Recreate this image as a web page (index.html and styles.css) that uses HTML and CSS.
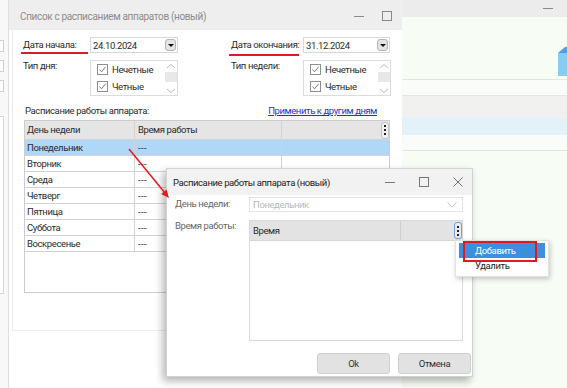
FILE: index.html
```html
<!DOCTYPE html>
<html lang="ru">
<head>
    <meta charset="UTF-8">
    <meta name="viewport" content="width=device-width, initial-scale=1.0">
    <title>Список с расписанием аппаратов</title>
    <link rel="stylesheet" href="styles.css">
</head>

<body>
    <div class="desktop">
        <!-- strip of the window behind, on the left -->
        <div class="side-left">
            <div class="stub"></div>
            <div class="stub"></div>
            <div class="stub"></div>
            <div class="stub-panel"></div>
        </div>

        <!-- main window -->
        <div class="main-win">
            <div class="win-title">
                <span>Список с расписанием аппаратов (новый)</span>
                <span class="win-btns">
                    <span class="btn-min"></span>
                    <span class="btn-max"></span>
                </span>
            </div>
            <div class="main-body">
                <div class="panel">
                    <div class="params">
                        <div class="param-col">
                            <div class="param-row">
                                <label class="lbl lbl-start marked">Дата начала:</label>
                                <div class="date-box"><span>24.10.2024</span><span class="drop-btn"></span></div>
                            </div>
                            <div class="param-row row-list">
                                <label class="lbl lbl-start">Тип дня:</label>
                                <div class="check-list">
                                    <div class="check-items">
                                        <div class="check-item"><span class="cb"><svg width="9" height="9" viewBox="0 0 9 9"><polyline points="1.5,4.5 3.5,6.8 7.6,1.8" fill="none" stroke="#7a7a7a" stroke-width="1"/></svg></span>Нечетные</div>
                                        <div class="check-item"><span class="cb"><svg width="9" height="9" viewBox="0 0 9 9"><polyline points="1.5,4.5 3.5,6.8 7.6,1.8" fill="none" stroke="#7a7a7a" stroke-width="1"/></svg></span>Четные</div>
                                    </div>
                                    <div class="vscroll">
                                        <svg width="12" height="9" viewBox="0 0 12 9"><polyline points="2,6 6,2.5 10,6" fill="none" stroke="#b9b9b9" stroke-width="1"/></svg>
                                        <div class="thumb"></div>
                                        <svg width="12" height="9" viewBox="0 0 12 9"><polyline points="2,3 6,6.5 10,3" fill="none" stroke="#b9b9b9" stroke-width="1"/></svg>
                                    </div>
                                </div>
                            </div>
                        </div>
                        <div class="param-col">
                            <div class="param-row">
                                <label class="lbl lbl-end marked marked-end">Дата окончания:</label>
                                <div class="date-box box-end"><span>31.12.2024</span><span class="drop-btn"></span></div>
                            </div>
                            <div class="param-row row-list">
                                <label class="lbl lbl-end">Тип недели:</label>
                                <div class="check-list box-end">
                                    <div class="check-items">
                                        <div class="check-item"><span class="cb"><svg width="9" height="9" viewBox="0 0 9 9"><polyline points="1.5,4.5 3.5,6.8 7.6,1.8" fill="none" stroke="#7a7a7a" stroke-width="1"/></svg></span>Нечетные</div>
                                        <div class="check-item"><span class="cb"><svg width="9" height="9" viewBox="0 0 9 9"><polyline points="1.5,4.5 3.5,6.8 7.6,1.8" fill="none" stroke="#7a7a7a" stroke-width="1"/></svg></span>Четные</div>
                                    </div>
                                    <div class="vscroll">
                                        <svg width="12" height="9" viewBox="0 0 12 9"><polyline points="2,6 6,2.5 10,6" fill="none" stroke="#b9b9b9" stroke-width="1"/></svg>
                                        <div class="thumb"></div>
                                        <svg width="12" height="9" viewBox="0 0 12 9"><polyline points="2,3 6,6.5 10,3" fill="none" stroke="#b9b9b9" stroke-width="1"/></svg>
                                    </div>
                                </div>
                            </div>
                        </div>
                    </div>

                    <div class="sched-head">
                        <span>Расписание работы аппарата:</span>
                        <a class="link" href="#">Применить к другим дням</a>
                    </div>

                    <div class="grid">
                        <div class="grid-head">
                            <div class="cell c1">День недели</div>
                            <div class="cell c2">Время работы</div>
                            <div class="cell c3"><span class="kebab"><i></i><i></i><i></i></span></div>
                        </div>
                        <div class="grid-row selected"><div class="cell c1">Понедельник</div><div class="cell c2 dash">---</div><div class="cell c3"></div></div>
                        <div class="grid-row"><div class="cell c1">Вторник</div><div class="cell c2 dash">---</div><div class="cell c3"></div></div>
                        <div class="grid-row"><div class="cell c1">Среда</div><div class="cell c2 dash">---</div><div class="cell c3"></div></div>
                        <div class="grid-row"><div class="cell c1">Четверг</div><div class="cell c2 dash">---</div><div class="cell c3"></div></div>
                        <div class="grid-row"><div class="cell c1">Пятница</div><div class="cell c2 dash">---</div><div class="cell c3"></div></div>
                        <div class="grid-row"><div class="cell c1">Суббота</div><div class="cell c2 dash">---</div><div class="cell c3"></div></div>
                        <div class="grid-row"><div class="cell c1">Воскресенье</div><div class="cell c2 dash">---</div><div class="cell c3"></div></div>
                    </div>
                </div>
            </div>
        </div>

        <!-- application behind, on the right -->
        <div class="side-right">
            <div class="app-top"><span class="btn-min"></span></div>
            <div class="app-hero">
                <svg width="9" height="29" viewBox="0 0 9 29"><polygon points="0,6 7,0 9,0 9,8 2,8 0,6" fill="#4f9fdc"/><polygon points="0,6 9,6 9,29 0,29" fill="#86cdf2"/></svg>
            </div>
            <div class="app-line"></div>
            <div class="app-band light"></div>
            <div class="app-line"></div>
            <div class="app-band grey"></div>
            <div class="app-band blue"></div>
            <div class="app-band light short"></div>
            <div class="app-line"></div>
        </div>
    </div>

    <!-- dialog window -->
    <div class="dialog">
        <div class="dlg-title">
            <span>Расписание работы аппарата (новый)</span>
            <span class="dlg-btns">
                <span class="btn-min"></span>
                <span class="btn-max"></span>
                <svg width="10" height="10" viewBox="0 0 10 10"><path d="M0.5 0.5 L9.5 9.5 M9.5 0.5 L0.5 9.5" stroke="#707070" stroke-width="1"/></svg>
            </span>
        </div>
        <div class="dlg-body">
            <div class="dlg-row">
                <label class="dlg-lbl">День недели:</label>
                <div class="combo">
                    <span>Понедельник</span>
                    <svg width="10" height="6" viewBox="0 0 10 6"><polyline points="0.5,0.5 5,5 9.5,0.5" fill="none" stroke="#c4c4c4" stroke-width="1"/></svg>
                </div>
            </div>
            <div class="dlg-row row-table">
                <label class="dlg-lbl">Время работы:</label>
                <div class="time-grid">
                    <div class="time-head">
                        <div class="t1">Время</div>
                        <div class="t2"><span class="kebab focus"><i></i><i></i><i></i></span></div>
                    </div>
                </div>
            </div>
            <div class="dlg-foot">
                <button class="dlg-btn">Ok</button>
                <button class="dlg-btn">Отмена</button>
            </div>
        </div>
    </div>

    <!-- context menu of the time grid -->
    <div class="ctx-menu">
        <div class="ctx-item active">Добавить</div>
        <div class="ctx-item">Удалить</div>
        <span class="ctx-mark"></span>
    </div>

    <!-- annotation arrow -->
    <svg class="arrow" width="567" height="388" viewBox="0 0 567 388">
        <line x1="129" y1="149" x2="165" y2="193" stroke="#e3191e" stroke-width="1.5"/>
        <polygon points="169,198 161.2,194 166.6,189.6" fill="#e3191e"/>
    </svg>
</body>
</html>
```

FILE: styles.css
```css
/* General Styles */
body {
    margin: 0;
    width: 567px;
    height: 388px;
    overflow: hidden;
    position: relative;
    font-family: 'Roboto', 'Liberation Sans', sans-serif;
    font-size: 9.5px;
    letter-spacing: -0.4px;
    color: #2b2b2b;
    background: #fff;
}

.desktop {
    display: flex;
    height: 388px;
}

/* Left strip */
.side-left {
    width: 8px;
    background: #f8f8f8;
    padding-top: 40px;
    display: flex;
    flex-direction: column;
    gap: 8px;
}

.stub {
    width: 3px;
    height: 10px;
    border: 1px solid #cfcfcf;
    border-left: none;
    background: #fff;
}

.stub-panel {
    width: 3px;
    height: 176px;
    margin-top: 16px;
    border: 1px solid #d8d8d8;
    border-left: none;
    background: #fff;
}

/* Main window */
.main-win {
    width: 394px;
    border-left: 1px solid #dedede;
    box-sizing: border-box;
    display: flex;
    flex-direction: column;
    background: #fff;
}

.win-title {
    height: 30px;
    flex-shrink: 0;
    background: #eeeeee;
    display: flex;
    align-items: center;
    padding: 2px 10px 0 11px;
    box-sizing: border-box;
    color: #8c8c8c;
    font-size: 10px;
    letter-spacing: -0.35px;
}

.win-btns {
    margin-left: auto;
    display: flex;
    align-items: center;
    gap: 18px;
}

.btn-min {
    display: block;
    width: 10px;
    height: 1px;
    background: #8a8a8a;
}

.btn-max {
    display: block;
    width: 8px;
    height: 8px;
    border: 1px solid #8a8a8a;
}

.main-body {
    flex: 1;
    padding-left: 3px;
}

.panel {
    height: 301px;
    box-sizing: border-box;
    border-left: 1px solid #ececec;
    border-bottom: 1px solid #ececec;
    padding: 7px 0 0 10px;
}

.params {
    display: flex;
    gap: 53px;
}

.param-row {
    display: flex;
}

.row-list {
    margin-top: 7px;
}

.lbl {
    line-height: 16px;
    position: relative;
    white-space: nowrap;
    flex-shrink: 0;
}

.row-list .lbl {
    line-height: 11px;
}

.lbl-start {
    width: 67px;
}

.lbl-end {
    width: 72px;
}

/* red annotation underline */
.marked::after {
    content: "";
    position: absolute;
    left: -2px;
    top: 15px;
    width: 67px;
    height: 2px;
    background: #e3191e;
}

.marked-end::after {
    top: 17px;
    width: 70px;
}

.date-box {
    width: 88px;
    height: 16px;
    box-sizing: border-box;
    border: 1px solid #d8d8d8;
    display: flex;
    align-items: center;
    padding-left: 2px;
}

.box-end {
    width: 87px;
}

.drop-btn {
    margin-left: auto;
    margin-right: 1px;
    width: 11px;
    height: 12px;
    box-sizing: border-box;
    border: 1px solid #b5b5b5;
    border-radius: 3px;
    background: #e4e4e4;
    display: flex;
    align-items: center;
    justify-content: center;
}

.drop-btn::after {
    content: "";
    border-left: 3px solid transparent;
    border-right: 3px solid transparent;
    border-top: 3px solid #111;
}

.check-list {
    width: 88px;
    height: 36px;
    box-sizing: border-box;
    border: 1px solid #dcdcdc;
    display: flex;
}

.check-items {
    flex: 1;
    padding: 3px 0 0 6px;
}

.check-item {
    height: 17px;
    display: flex;
    align-items: flex-start;
    gap: 4px;
    line-height: 12px;
}

.cb {
    width: 11px;
    height: 11px;
    box-sizing: border-box;
    border: 1px solid #8f8f8f;
    display: flex;
    align-items: center;
    justify-content: center;
}

.vscroll {
    width: 12px;
    display: flex;
    flex-direction: column;
    align-items: center;
    padding-top: 1px;
}

.vscroll .thumb {
    width: 12px;
    height: 10px;
    margin: 1px 0 4px;
    background: #e8e8e8;
}

.sched-head {
    width: 352px;
    margin-top: 8px;
    padding-left: 2px;
    display: flex;
    justify-content: space-between;
    line-height: 14px;
}

.link {
    color: #2b2bd9;
    text-decoration: underline;
}

/* Day grid */
.grid {
    width: 366px;
    height: 173px;
    box-sizing: border-box;
    margin: 2px 0 0 1px;
    border: 1px solid #cdcdcd;
}

.grid-head, .grid-row {
    display: flex;
    border-bottom: 1px solid #d3d3d3;
}

.grid-head {
    height: 18px;
    background: #e5e5e5;
}

.grid-row {
    height: 15px;
}

.grid-row.selected {
    background: #b0d6f8;
}

.cell {
    box-sizing: border-box;
    padding-left: 2px;
    display: flex;
    align-items: center;
    line-height: 12px;
}

.c1 {
    width: 110px;
    border-right: 1px solid #d3d3d3;
}

.c2 {
    width: 147px;
    border-right: 1px solid #d3d3d3;
    padding-left: 3px;
}

.dash {
    letter-spacing: 0.4px;
}

.c3 {
    flex: 1;
    justify-content: flex-end;
    padding-right: 0;
}

.kebab {
    width: 8px;
    height: 17px;
    box-sizing: border-box;
    border: 1px solid #c4c4c4;
    border-radius: 3px;
    background: #f1f1f1;
    display: flex;
    flex-direction: column;
    align-items: center;
    justify-content: center;
    gap: 2px;
}

.kebab i {
    display: block;
    width: 2px;
    height: 2px;
    background: #222;
}

.kebab.focus {
    border-color: #6aa2db;
    background: #ebebeb;
}

/* Right app */
.side-right {
    flex: 1;
    background: #f7fcf5;
    display: flex;
    flex-direction: column;
}

.app-top {
    height: 17px;
    background: #ececec;
    display: flex;
    align-items: center;
    justify-content: flex-end;
    padding-right: 14px;
}

.app-hero {
    height: 62px;
    display: flex;
    justify-content: flex-end;
    padding-top: 30px;
    box-sizing: border-box;
}

.app-line {
    height: 1px;
    background: #e3e7e1;
}

.app-band.light {
    height: 15px;
    background: #f9fcf8;
}

.app-band.grey {
    height: 22px;
    background: #f1f2f0;
}

.app-band.blue {
    height: 17px;
    background: #e3f1f9;
}

.app-band.short {
    height: 15px;
}

/* Dialog */
.dialog {
    position: absolute;
    left: 166px;
    top: 168px;
    width: 307px;
    height: 209px;
    box-sizing: border-box;
    border: 1px solid #d2d2d2;
    background: #fff;
    box-shadow: -3px 4px 8px rgba(0, 0, 0, 0.3);
}

.dlg-title {
    height: 26px;
    background: #f2f2f2;
    display: flex;
    align-items: center;
    padding: 0 9px 0 6px;
    color: #222;
}

.dlg-btns {
    margin-left: auto;
    display: flex;
    align-items: center;
    gap: 24px;
}

.dlg-btns .btn-min {
    background: #777;
}

.dlg-btns .btn-max {
    border-color: #777;
}

.dlg-body {
    padding: 2px 9px 0 8px;
}

.dlg-row {
    display: flex;
}

.row-table {
    margin-top: 8px;
}

.dlg-lbl {
    width: 74px;
    color: #666;
    line-height: 14px;
}

.row-table .dlg-lbl {
    line-height: 11px;
}

.combo {
    width: 214px;
    height: 15px;
    box-sizing: border-box;
    border: 1px solid #e4e4e4;
    display: flex;
    align-items: center;
    justify-content: space-between;
    padding: 0 5px 0 3px;
    color: #b9b9b9;
}

.time-grid {
    width: 214px;
    height: 121px;
    box-sizing: border-box;
    border: 1px solid #d9d9d9;
}

.time-head {
    height: 19px;
    background: #e3e3e3;
    display: flex;
    border-bottom: 1px solid #d6d6d6;
}

.t1 {
    width: 147px;
    border-right: 1px solid #cfcfcf;
    padding-left: 3px;
    display: flex;
    align-items: center;
}

.t2 {
    flex: 1;
    display: flex;
    align-items: center;
    justify-content: flex-end;
}

.dlg-foot {
    display: flex;
    justify-content: flex-end;
    gap: 8px;
    margin: 12px -8px 0 0;
}

.dlg-btn {
    width: 73px;
    height: 21px;
    border: 1px solid #d0d0d0;
    border-radius: 3px;
    background: #e2e2e2;
    font-family: inherit;
    font-size: inherit;
    letter-spacing: inherit;
    color: #333;
    padding: 0;
}

/* Context menu */
.ctx-menu {
    position: absolute;
    left: 455px;
    top: 240px;
    width: 94px;
    height: 37px;
    box-sizing: border-box;
    padding: 2px 3px;
    background: #fff;
    border: 1px solid #e2e2e2;
    box-shadow: 1px 2px 5px rgba(0, 0, 0, 0.22);
}

.ctx-item {
    height: 15px;
    line-height: 15px;
    padding-left: 16px;
    color: #222;
}

.ctx-item.active {
    background: #3c8fde;
    color: #fff;
}

.ctx-mark {
    position: absolute;
    left: 7px;
    top: 0;
    width: 74px;
    height: 21px;
    box-sizing: border-box;
    border: 2px solid #e3191e;
}

.arrow {
    position: absolute;
    left: 0;
    top: 0;
    pointer-events: none;
}
```
